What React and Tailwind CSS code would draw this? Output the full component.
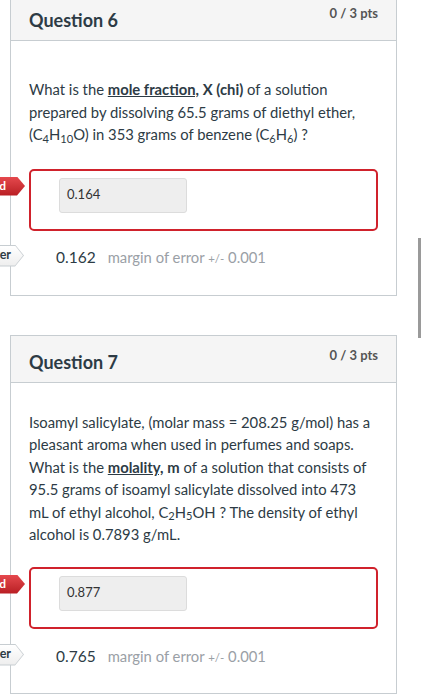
import React from 'react';

const YouAnswered = () => (
  <div className="absolute top-[8px] right-[calc(100%+4px)] h-[19px] flex items-center whitespace-nowrap pl-[10px] pr-[19px] text-[12px] font-bold text-white bg-gradient-to-b from-[#e5484d] to-[#b81c22] [clip-path:polygon(0_0,calc(100%-8px)_0,100%_50%,calc(100%-8px)_100%,0_100%)]">
    You Answered
  </div>
);

const CorrectAnswer = () => (
  <div className="absolute top-[-2px] right-[calc(100%+5px)] h-[22px] p-px bg-[#c7cdd1] [clip-path:polygon(0_0,calc(100%-9px)_0,100%_50%,calc(100%-9px)_100%,0_100%)]">
    <div className="h-full flex items-center whitespace-nowrap pl-[10px] pr-[12px] text-[12.5px] font-bold text-[#2d3b45] bg-gradient-to-b from-white to-[#eeeeee] [clip-path:polygon(0_0,calc(100%-8px)_0,100%_50%,calc(100%-8px)_100%,0_100%)]">
      Correct Answer
    </div>
  </div>
);

const Question = ({ title, body, answered, correct, bodyPad, boxGap, answerGap, bottomPad, className }) => (
  <div className={`relative border border-[#c7cdd1] bg-white ${className}`}>
    <div className="h-[47px] flex justify-between items-start px-[18px] bg-[#f5f5f5] border-b border-[#c7cdd1]">
      <h2 className="pt-[15px] text-[18px] leading-[22px] font-bold text-[#2d3b45]">{title}</h2>
      <div className="pt-[11px] text-[13px] leading-[16px] font-bold text-[#555]">0 / 3 pts</div>
    </div>
    <div className={`px-[18px] ${bodyPad} ${bottomPad}`}>
      <p className="text-[14.8px] leading-[22.5px] text-[#2d3b45] whitespace-nowrap">{body}</p>
      <div className={`relative ${boxGap}`}>
        <YouAnswered />
        <div className="h-[62px] border-2 border-[#d0222c] rounded-[5px] pt-[7px] pl-[28px]">
          <div className="w-[128px] h-[35px] flex items-center pl-[7px] bg-[#eeeeee] border border-[#dcdcdc] rounded-[3px] text-[13px] text-[#333]">
            {answered}
          </div>
        </div>
      </div>
      <div className={`relative h-[22px] flex items-center pl-[27px] ${answerGap}`}>
        <CorrectAnswer />
        <span className="text-[15.5px] text-[#2d3b45]">{correct}</span>
        <span className="ml-[12px] text-[14.8px] text-[#9aa0a6]">
          margin of error <span className="text-[11.5px]">+/-</span> 0.001
        </span>
      </div>
    </div>
  </div>
);

const App = () => {
  return (
    <div className="relative w-[425px] h-[700px] overflow-hidden bg-white font-['Lato','Liberation_Sans',sans-serif]">
      <div className="ml-[10px] w-[387px] -mt-[7px]">
        <Question
          title="Question 6"
          bodyPad="pt-[37px]"
          boxGap="mt-[23px]"
          answerGap="mt-[16px]"
          bottomPad="pb-[26px]"
          answered="0.164"
          correct="0.162"
          body={
            <>
              What is the <b className="underline">mole fraction,</b> <b>X (chi)</b> of a solution
              <br />
              prepared by dissolving 65.5 grams of diethyl ether,
              <br />
              (C<sub>4</sub>H<sub>10</sub>O) in 353 grams of benzene (C<sub>6</sub>H<sub>6</sub>) ?
            </>
          }
        />
        <Question
          className="mt-[39px]"
          title="Question 7"
          bodyPad="pt-[28px]"
          boxGap="mt-[21px]"
          answerGap="mt-[17px]"
          bottomPad="pb-[25px]"
          answered="0.877"
          correct="0.765"
          body={
            <>
              Isoamyl salicylate, (molar mass = 208.25 g/mol) has a
              <br />
              pleasant aroma when used in perfumes and soaps.
              <br />
              What is the <b className="underline">molality,</b> <b>m</b> of a solution that consists of
              <br />
              95.5 grams of isoamyl salicylate dissolved into 473
              <br />
              mL of ethyl alcohol, C<sub>2</sub>H<sub>5</sub>OH ? The density of ethyl
              <br />
              alcohol is 0.7893 g/mL.
            </>
          }
        />
      </div>
      <div className="absolute left-[418px] top-[238px] w-[3px] h-[100px] bg-[#9a9a9a]" />
    </div>
  );
};

export default App;
